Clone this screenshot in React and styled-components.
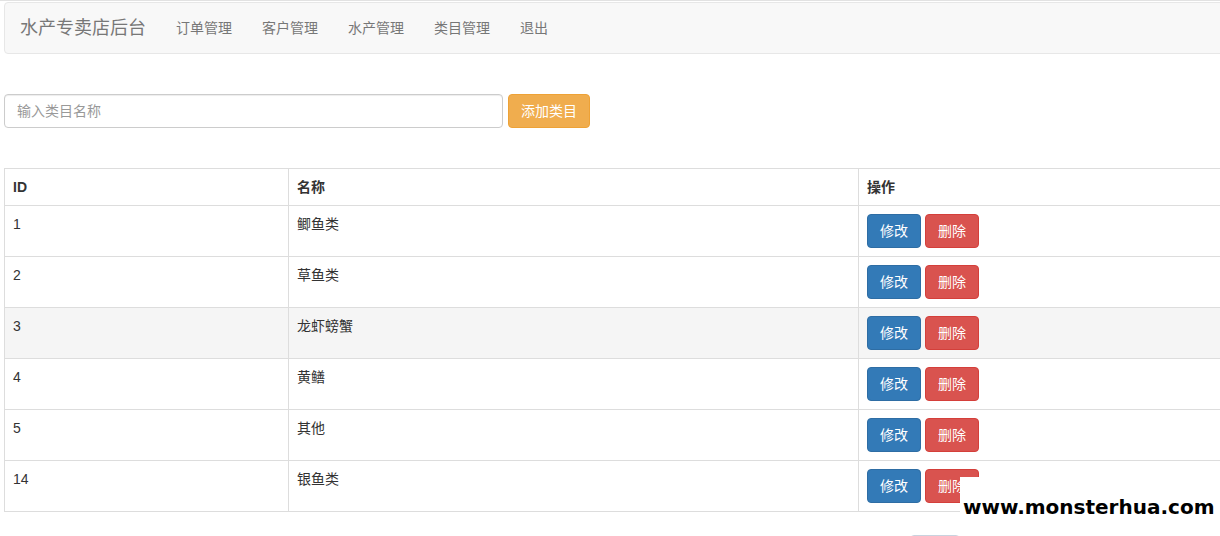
import React from "react";
import styled, { createGlobalStyle } from "styled-components";

const Global = createGlobalStyle`
  html, body { margin: 0; padding: 0; background: #fff; overflow: hidden; }
  body {
    font-family: "Liberation Sans", Arial, "Noto Sans CJK SC", sans-serif;
    font-size: 14px;
    line-height: 20px;
    color: #333;
  }
  * { box-sizing: border-box; }
`;

const Page = styled.div`
  position: relative;
  width: 1220px;
  height: 536px;
  overflow: hidden;
  border-top: 1px solid #e2e2e2;
  padding-left: 4px;
`;

const Navbar = styled.nav`
  display: flex;
  align-items: center;
  width: 1230px;
  height: 52px;
  margin-top: 1px;
  background: #f8f8f8;
  border: 1px solid #e7e7e7;
  border-radius: 4px;
`;

const Brand = styled.a`
  padding: 15px;
  font-size: 18px;
  line-height: 20px;
  color: #777;
  text-decoration: none;
`;

const NavLink = styled.a`
  padding: 15px;
  font-size: 14px;
  line-height: 20px;
  color: #777;
  text-decoration: none;
`;

const Form = styled.div`
  display: flex;
  gap: 5px;
  margin-top: 40px;
`;

const Input = styled.input`
  width: 499px;
  height: 34px;
  padding: 6px 12px;
  font-family: inherit;
  font-size: 14px;
  color: #555;
  border: 1px solid #ccc;
  border-radius: 4px;
  box-shadow: inset 0 1px 1px rgba(0,0,0,.075);
  outline: none;
  &::placeholder { color: #999; }
`;

const Btn = styled.button`
  height: 34px;
  padding: 6px 12px;
  font-family: inherit;
  font-size: 14px;
  line-height: 20px;
  color: #fff;
  border: 1px solid ${p => p.$border};
  background: ${p => p.$bg};
  border-radius: 4px;
  cursor: pointer;
`;

const Table = styled.table`
  margin-top: 40px;
  width: 1230px;
  border-collapse: collapse;
  border: 1px solid #ddd;
  th, td {
    border: 1px solid #ddd;
    padding: 8px;
    text-align: left;
    vertical-align: top;
    line-height: 20px;
  }
  th { font-weight: bold; }
  td { height: 51px; }
`;

const Row = styled.tr`
  background: ${p => (p.$hover ? "#f5f5f5" : "#fff")};
`;

const Actions = styled.div`
  display: flex;
  gap: 4px;
`;

const Peek = styled.div`
  position: absolute;
  left: 910px;
  top: 534px;
  width: 50px;
  height: 10px;
  border: 1px solid #c9d3df;
  border-radius: 4px;
`;

const Watermark = styled.div`
  position: absolute;
  left: 960px;
  top: 476px;
  width: 260px;
  height: 60px;
  background: #fff;
  padding: 15px 0 0 3px;
  font-family: "DejaVu Sans", sans-serif;
  font-weight: bold;
  font-size: 20px;
  line-height: 30px;
  color: #000;
  white-space: nowrap;
`;

const rows = [
  { id: 1, name: "鲫鱼类" },
  { id: 2, name: "草鱼类" },
  { id: 3, name: "龙虾螃蟹", hover: true },
  { id: 4, name: "黄鳝" },
  { id: 5, name: "其他" },
  { id: 14, name: "银鱼类" },
];

export default function App() {
  return (
    <Page>
      <Global />
      <Navbar>
        <Brand>水产专卖店后台</Brand>
        <NavLink>订单管理</NavLink>
        <NavLink>客户管理</NavLink>
        <NavLink>水产管理</NavLink>
        <NavLink>类目管理</NavLink>
        <NavLink>退出</NavLink>
      </Navbar>
      <Form>
        <Input placeholder="输入类目名称" />
        <Btn $bg="#f0ad4e" $border="#eea236">添加类目</Btn>
      </Form>
      <Table>
        <colgroup>
          <col style={{ width: 284 }} />
          <col style={{ width: 570 }} />
          <col />
        </colgroup>
        <thead>
          <tr>
            <th>ID</th>
            <th>名称</th>
            <th>操作</th>
          </tr>
        </thead>
        <tbody>
          {rows.map(r => (
            <Row key={r.id} $hover={r.hover}>
              <td>{r.id}</td>
              <td>{r.name}</td>
              <td>
                <Actions>
                  <Btn $bg="#337ab7" $border="#2e6da4">修改</Btn>
                  <Btn $bg="#d9534f" $border="#d43f3a">删除</Btn>
                </Actions>
              </td>
            </Row>
          ))}
        </tbody>
      </Table>
      <Peek />
      <Watermark>www.monsterhua.com</Watermark>
    </Page>
  );
}
